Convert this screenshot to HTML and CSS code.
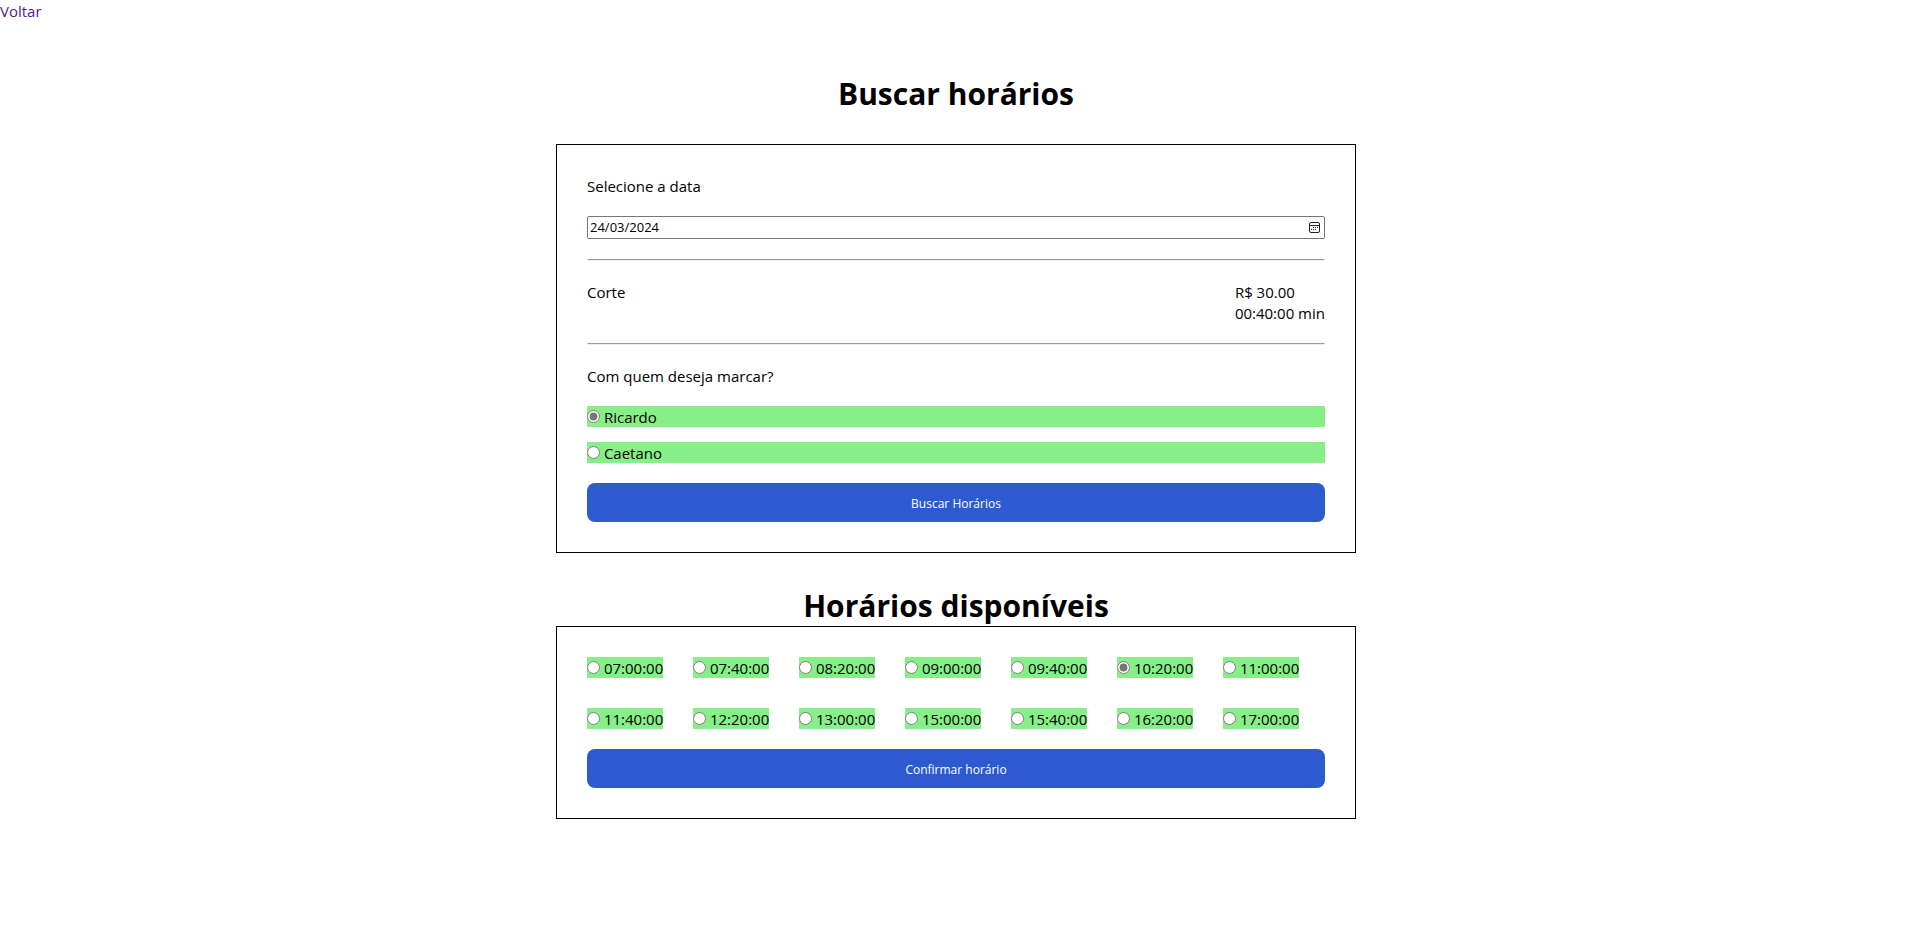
FILE: index.html
```html
<!DOCTYPE html>
<html lang="pt-BR">
<head>
<meta charset="utf-8">
<meta name="viewport" content="width=device-width, initial-scale=1">
<title>Buscar horários</title>
<link rel="stylesheet" href="styles.css">
</head>
<body>
<header><a class="back" href="#">Voltar</a></header>
<main class="page">
  <h1 class="title">Buscar horários</h1>
  <form class="panel panel-search">
    <label class="text" for="date">Selecione a data</label>
    <div class="date-field">
      <input id="date" class="date-input" type="text" value="24/03/2024">
      <button class="date-button" type="button" aria-label="Abrir calendário">
        <svg class="date-icon" viewBox="0 0 13 13" fill="none" stroke="#222">
          <rect x="1.5" y="1.5" width="10" height="10" rx="1.5"/>
          <path d="M1.5 4.5h10"/>
          <path d="M5 6.5h1M7 6.5h1M9 6.5h1M3 8.5h1M5 8.5h1M7 8.5h1"/>
        </svg>
      </button>
    </div>
    <hr class="rule">
    <div class="service">
      <p class="text">Corte</p>
      <div><p class="text">R$ 30.00</p><p class="text">00:40:00 min</p></div>
    </div>
    <hr class="rule">
    <p class="text">Com quem deseja marcar?</p>
    <div class="people">
      <label class="text option"><input class="radio" type="radio" name="person" checked> Ricardo</label>
      <label class="text option"><input class="radio" type="radio" name="person"> Caetano</label>
    </div>
    <button class="submit" type="button">Buscar Horários</button>
  </form>
  <h1 class="title">Horários disponíveis</h1>
  <form class="panel">
    <div class="slots">
      <label class="text option"><input class="radio" type="radio" name="slot"> 07:00:00</label>
      <label class="text option"><input class="radio" type="radio" name="slot"> 07:40:00</label>
      <label class="text option"><input class="radio" type="radio" name="slot"> 08:20:00</label>
      <label class="text option"><input class="radio" type="radio" name="slot"> 09:00:00</label>
      <label class="text option"><input class="radio" type="radio" name="slot"> 09:40:00</label>
      <label class="text option"><input class="radio" type="radio" name="slot" checked> 10:20:00</label>
      <label class="text option"><input class="radio" type="radio" name="slot"> 11:00:00</label>
      <label class="text option"><input class="radio" type="radio" name="slot"> 11:40:00</label>
      <label class="text option"><input class="radio" type="radio" name="slot"> 12:20:00</label>
      <label class="text option"><input class="radio" type="radio" name="slot"> 13:00:00</label>
      <label class="text option"><input class="radio" type="radio" name="slot"> 15:00:00</label>
      <label class="text option"><input class="radio" type="radio" name="slot"> 15:40:00</label>
      <label class="text option"><input class="radio" type="radio" name="slot"> 16:20:00</label>
      <label class="text option"><input class="radio" type="radio" name="slot"> 17:00:00</label>
    </div>
    <button class="submit" type="button">Confirmar horário</button>
  </form>
</main>
</body>
</html>
```
FILE: styles.css
```css
* {
  margin: 0;
  padding: 0;
  box-sizing: border-box;
}

body {
  font-family: "Segoe UI", "Open Sans", "Noto Sans", sans-serif;
  font-size: 15px;
  line-height: 21px;
  color: #000;
  background: #fff;
}

.back {
  display: block;
  width: fit-content;
  color: #551a8b;
  text-decoration: none;
}

.page {
  max-width: 800px;
  margin: 50px auto;
}

.title {
  padding-top: 3px;
  font-size: 30px;
  line-height: 40px;
  text-align: center;
}

.panel {
  display: flex;
  flex-direction: column;
  gap: 20px;
  padding: 30px;
  border: 1px solid #000;
}

.panel-search {
  margin: 30px 0;
}

.text,
.back {
  padding-top: 1px;
  line-height: 20px;
}

.date-field {
  display: flex;
  align-items: center;
  height: 23px;
  padding: 0 3px 0 2px;
  border: 1px solid #767676;
  border-radius: 2px;
}

.date-input {
  flex: 1;
  min-width: 0;
  border: 0;
  outline: 0;
  background: none;
  font: inherit;
  font-size: 13px;
}

.date-button {
  display: flex;
  border: 0;
  background: none;
}

.date-icon {
  width: 13px;
  height: 13px;
}

.rule {
  border: 1px solid;
  border-color: #9a9a9a transparent #eee;
}

.service {
  display: flex;
  justify-content: space-between;
}

.people {
  display: grid;
  gap: 15px;
}

.slots {
  display: grid;
  grid-template-columns: repeat(auto-fill, 76px);
  gap: 30px;
}

.option {
  height: 21px;
  background: #87ef87;
  white-space: nowrap;
}

.radio {
  width: 13px;
  height: 13px;
  accent-color: #767676;
}

.submit {
  height: 39px;
  padding-top: 1px;
  border: 0;
  border-radius: 8px;
  background: #2e5ad0;
  color: #fff;
  font: inherit;
  font-size: 12px;
}
```
